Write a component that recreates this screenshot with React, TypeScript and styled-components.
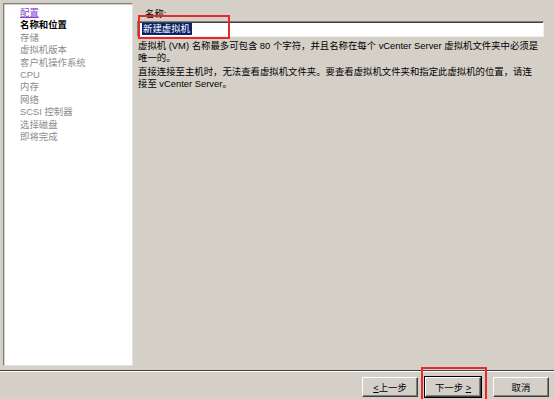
import React from 'react'
import styled, { createGlobalStyle } from 'styled-components'

const Global = createGlobalStyle`
    html, body {
        margin: 0;
        padding: 0;
        background: #d4d0c8;
    }
    body {
        font-family: "Liberation Sans", "Noto Sans CJK SC", sans-serif;
        font-size: 9.4px;
        color: #000;
    }
`

const Wizard = styled.div`
    width: 554px;
    height: 399px;
    display: flex;
    flex-direction: column;
    background: #d4d0c8;
    overflow: hidden;
`

const Body = styled.div`
    flex: 1;
    display: flex;
    padding: 3px 0 0 3px;
    min-height: 0;
`

const Steps = styled.ul`
    width: 130px;
    height: 363px;
    margin: 0;
    padding: 3px 0 0 16px;
    box-sizing: border-box;
    list-style: none;
    background: #fff;
    border-left: 1px solid #808080;
    border-top: 1px solid #808080;
    border-right: 1px solid #e4e2dc;
    border-bottom: 1px solid #e4e2dc;
    box-shadow: inset 1px 1px 0 #d4d0c8;
`

const Step = styled.li<{ $state: 'done' | 'current' | 'todo' }>`
    line-height: 12.4px;
    height: 12.4px;
    white-space: nowrap;
    color: ${p => (p.$state === 'done' ? '#8a3fd0' : p.$state === 'current' ? '#000' : '#8c8c8c')};
    font-weight: ${p => (p.$state === 'current' ? 'bold' : 'normal')};
    text-decoration: ${p => (p.$state === 'done' ? 'underline' : 'none')};
`

const Content = styled.div`
    position: relative;
    flex: 1;
    padding: 4px 10px 0 4px;
`

const Label = styled.div`
    padding-left: 8px;
    line-height: 13px;
`

const NameInput = styled.div`
    height: 14px;
    margin-top: 1px;
    background: #fff;
    border-top: 1px solid #808080;
    border-left: 1px solid #808080;
    border-right: 1px solid #f0efea;
    border-bottom: 1px solid #f0efea;
    box-shadow: inset 1px 1px 0 #404040;
    display: flex;
    align-items: center;
    padding-left: 4px;
`

const Selected = styled.span`
    background: #0a246a;
    color: #fff;
    line-height: 12px;
    padding: 0 2px 0 1px;
`

const Para = styled.p<{ $top: number }>`
    margin: ${p => p.$top}px 0 0 1px;
    line-height: 12px;
    width: 403px;
`

const Highlight = styled.div`
    position: absolute;
    border: 2px solid #e8282a;
    pointer-events: none;
`

const InputHighlight = styled(Highlight)`
    left: 5px;
    top: 12px;
    width: 88px;
    height: 20px;
`

const Footer = styled.div`
    height: 29px;
    border-top: 1px solid #404040;
    box-shadow: inset 0 1px 0 #fff;
    display: flex;
    align-items: flex-start;
    justify-content: flex-end;
    padding: 6px 5px 0 0;
    box-sizing: border-box;
`

const ButtonWrap = styled.div<{ $gap: number }>`
    position: relative;
    margin-left: ${p => p.$gap}px;
`

const Button = styled.button<{ $primary?: boolean }>`
    display: block;
    width: 56px;
    height: 20px;
    padding: 0;
    font-family: "Liberation Sans", "Noto Sans CJK SC", sans-serif;
    font-size: 9.4px;
    color: #000;
    background: #d4d0c8;
    border: 1px solid;
    border-color: #fff #404040 #404040 #fff;
    box-shadow: inset -1px -1px 0 #808080;
    outline: ${p => (p.$primary ? '1px solid #000' : 'none')};
    cursor: default;

    u {
        text-decoration: underline;
    }
`

const ButtonHighlight = styled(Highlight)`
    left: -4px;
    top: -10px;
    width: 62px;
    height: 33px;
`

export default function App() {
    return (
        <Wizard>
            <Global />
            <Body>
                <Steps>
                    <Step $state="done">配置</Step>
                    <Step $state="current">名称和位置</Step>
                    <Step $state="todo">存储</Step>
                    <Step $state="todo">虚拟机版本</Step>
                    <Step $state="todo">客户机操作系统</Step>
                    <Step $state="todo">CPU</Step>
                    <Step $state="todo">内存</Step>
                    <Step $state="todo">网络</Step>
                    <Step $state="todo">SCSI 控制器</Step>
                    <Step $state="todo">选择磁盘</Step>
                    <Step $state="todo">即将完成</Step>
                </Steps>
                <Content>
                    <Label>名称:</Label>
                    <NameInput>
                        <Selected>新建虚拟机</Selected>
                    </NameInput>
                    <InputHighlight />
                    <Para $top={3}>
                        虚拟机 (VM) 名称最多可包含 80 个字符，并且名称在每个 vCenter Server 虚拟机文件夹中必须是唯一的。
                    </Para>
                    <Para $top={2}>
                        直接连接至主机时，无法查看虚拟机文件夹。要查看虚拟机文件夹和指定此虚拟机的位置，请连接至 vCenter Server。
                    </Para>
                </Content>
            </Body>
            <Footer>
                <ButtonWrap $gap={0}>
                    <Button><u>&lt;</u>上一步</Button>
                </ButtonWrap>
                <ButtonWrap $gap={7}>
                    <Button $primary>下一步 <u>&gt;</u></Button>
                    <ButtonHighlight />
                </ButtonWrap>
                <ButtonWrap $gap={12}>
                    <Button>取消</Button>
                </ButtonWrap>
            </Footer>
        </Wizard>
    )
}
